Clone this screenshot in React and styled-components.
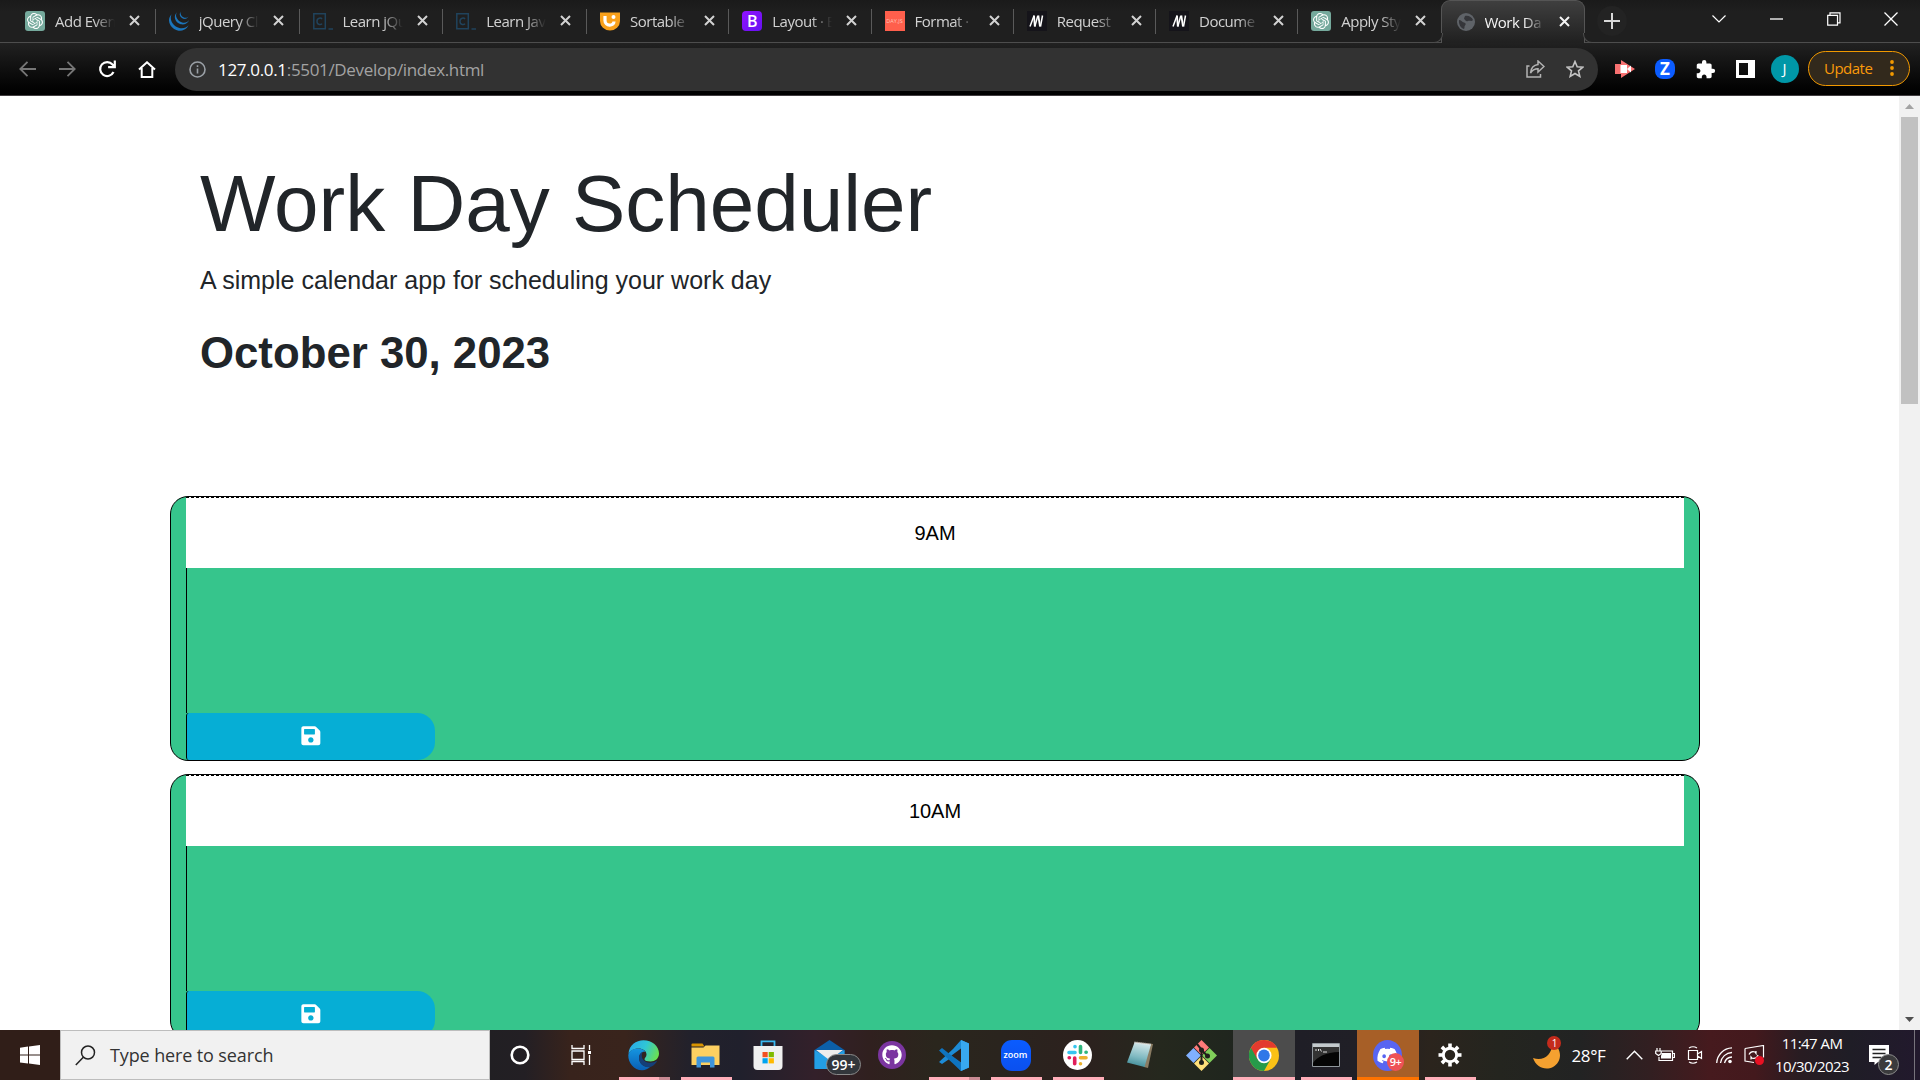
import React from "react";
import styled, { createGlobalStyle, css } from "styled-components";
import { SiOpenai, SiJquery } from "react-icons/si";
import { FaGithub, FaDiscord, FaSave } from "react-icons/fa";
import { MdExtension } from "react-icons/md";

const UI = `"Open Sans", "Noto Sans", sans-serif`;

const GlobalStyle = createGlobalStyle`
  * { box-sizing: border-box; }
  body { margin: 0; overflow: hidden; }
  svg { display: block; flex: none; }
`;

const Screen = styled.div`
  width: 1920px;
  height: 1080px;
  display: flex;
  flex-direction: column;
  overflow: hidden;
  background: #fff;
  font-family: ${UI};
`;

/* ---------- browser chrome ---------- */
const TabStrip = styled.div`
  height: 43px;
  flex: none;
  display: flex;
  align-items: stretch;
  padding-left: 12px;
  background: linear-gradient(#1a1a1a, #1f1f1f 12px);
  border-bottom: 1px solid #4d4d4d;
`;

const Tab = styled.div`
  position: relative;
  width: ${(p) => (p.$wide ? 143.75 : 142.25)}px;
  flex: none;
  display: flex;
  align-items: center;
  padding: 0 0 1px 13px;
  color: ${(p) => (p.$active ? "#f4f4f4" : "#d2d2d2")};
  ${(p) =>
    p.$divider &&
    css`
      &::after {
        content: "";
        position: absolute;
        right: 0;
        top: 9px;
        width: 1px;
        height: 25px;
        background: #5a5a5a;
      }
    `}
  ${(p) =>
    p.$active &&
    css`
      height: 43px;
      width: 144px;
      padding-left: 15px;
      background: linear-gradient(#3f3f3f, #202020);
      border: 1px solid #555;
      border-bottom: 0;
      border-radius: 9px 9px 0 0;
      &::before,
      &::after {
        content: "";
        position: absolute;
        bottom: 0;
        width: 9px;
        height: 9px;
        border-bottom: 1px solid #4d4d4d;
        background: #1f1f1f;
      }
      &::before {
        left: -9px;
        border-right: 1px solid #4d4d4d;
        border-radius: 0 0 9px 0;
      }
      &::after {
        right: -9px;
        border-left: 1px solid #4d4d4d;
        border-radius: 0 0 0 9px;
      }
    `}
`;

const Favicon = styled.span`
  width: 20px;
  height: 20px;
  flex: none;
  display: flex;
  align-items: center;
  justify-content: center;
  border-radius: ${(p) => p.$radius || 0}px;
  background: ${(p) => p.$bg || "transparent"};
  color: ${(p) => p.$fg || "#fff"};
  font: ${(p) => p.$font || `14px ${UI}`};
`;

const TabTitle = styled.span`
  width: 60px;
  margin-left: 10px;
  overflow: hidden;
  white-space: nowrap;
  font-size: 15px;
  letter-spacing: -0.5px;
  line-height: 22px;
  mask-image: linear-gradient(90deg, #000 65%, transparent 100%);
`;

const TabClose = styled.span`
  margin-left: 14px;
`;

const NewTab = styled.span`
  width: 30px;
  height: 30px;
  margin: 6px 0 0 12px;
  border-radius: 50%;
  background: #232323;
  display: flex;
  align-items: center;
  justify-content: center;
`;

const WindowControls = styled.div`
  margin-left: auto;
  display: flex;
  height: 37px;
`;

const WindowButton = styled.span`
  width: 57.3px;
  display: flex;
  align-items: center;
  justify-content: center;
`;

const Toolbar = styled.div`
  height: 53px;
  flex: none;
  display: flex;
  align-items: center;
  padding: 0 10px 0 7px;
  background: linear-gradient(#212121, #030303 85%, #000);
  border-bottom: 1px solid #413d40;
`;

const ToolButton = styled.span`
  width: 40px;
  display: flex;
  justify-content: center;
  align-items: center;
  color: #fff;
`;

const AddressBar = styled.div`
  width: 1423px;
  height: 43px;
  margin: 0 7px 0 8px;
  padding: 0 14px 0 14px;
  border-radius: 22px;
  background: #323232;
  display: flex;
  align-items: center;
`;

const Url = styled.span`
  margin-left: 12px;
  flex: 1;
  color: #a3a3a3;
  font-size: 17px;
  letter-spacing: -0.33px;
  b { font-weight: 400; color: #fff; }
`;

const AddressActions = styled.span`
  display: flex;
  gap: 21px;
  align-items: center;
`;

const Avatar = styled.span`
  width: 28px;
  height: 28px;
  margin-left: 5.5px;
  border-radius: 50%;
  background: #0097a7;
  color: #fff;
  font-size: 15px;
  line-height: 27px;
  text-align: center;
`;

const UpdatePill = styled.span`
  width: 102px;
  height: 35px;
  margin: -2px 0 0 9.5px;
  padding: 0 15px 0 15px;
  border: 1.5px solid #f29900;
  border-radius: 18px;
  background: #32291c;
  color: #fa9a0a;
  font-size: 15px;
  letter-spacing: -0.5px;
  display: flex;
  align-items: center;
  justify-content: space-between;
`;

/* ---------- page ---------- */
const Viewport = styled.div`
  height: 934px;
  flex: none;
  display: flex;
  overflow: hidden;
`;

const Page = styled.main`
  width: 1899px;
  padding: 60px 199px 0 170px;
  color: #212529;
  font-family: "Liberation Sans", Arial, sans-serif;
`;

const Header = styled.header`
  height: 340px;
  padding-left: 30px;
`;

const Title = styled.h1`
  margin: 0 0 10px;
  font-size: 80px;
  line-height: 95px;
  height: 96px;
  font-weight: 400;
`;

const Lead = styled.p`
  margin: 0 0 27px;
  font-size: 25px;
  line-height: 37.5px;
`;

const Today = styled.p`
  margin: 0;
  font-size: 43.75px;
  line-height: 52.5px;
  font-weight: 700;
`;

const TimeBlock = styled.section`
  height: 265px;
  margin-bottom: 13px;
  padding: 0 15px;
  border: 1px solid #000;
  border-radius: 18px;
  background: #36c58c;
  display: flex;
  flex-direction: column;
`;

const Hour = styled.div`
  height: 71px;
  flex: none;
  border-top: 1px dashed #000;
  background: #fff;
  color: #000;
  font-size: 20px;
  line-height: 70px;
  text-align: center;
`;

const Description = styled.div`
  height: 145px;
  flex: none;
  border-left: 1px solid #000;
`;

const SaveButton = styled.div`
  width: 249px;
  height: 47px;
  flex: none;
  display: flex;
  align-items: center;
  justify-content: center;
  padding: 0 1px 1px 0;
  border-left: 1px solid #000;
  border-radius: 3px 18px 18px 3px;
  background: #06aed5;
  color: #fff;
`;

const Scrollbar = styled.aside`
  width: 21px;
  flex: none;
  padding: 0 2px;
  background: #f1f1f1;
  display: flex;
  flex-direction: column;
  align-items: center;
`;

const ScrollArrow = styled.span`
  height: 21px;
  display: flex;
  align-items: center;
`;

const ScrollThumb = styled.span`
  width: 17px;
  height: 287px;
  margin-bottom: auto;
  background: #c1c1c1;
`;

/* ---------- taskbar ---------- */
const Taskbar = styled.footer`
  height: 50px;
  flex: none;
  display: flex;
  align-items: stretch;
  color: #fff;
  background: linear-gradient(
    90deg,
    #301e18 0, #301e18 60px, #211f23 490px, #231f24 525px, #38231c 570px, #39241c 625px,
    #22212b 690px, #20202c 740px, #33202a 815px, #30201f 870px, #2a261d 935px, #2a241e 1000px,
    #2c211e 1080px, #25281e 1160px, #20261e 1225px, #1f1e26 1300px, #201f26 1355px,
    #2b241d 1430px, #24251f 1500px, #222323 1580px, #321f21 1650px, #461a1e 1710px,
    #43191d 1755px, #281c22 1800px, #1f1d26 1850px, #22192d 1920px
  );
`;

const StartButton = styled.span`
  width: 60px;
  display: flex;
  align-items: center;
  justify-content: center;
`;

const SearchBox = styled.div`
  width: 430px;
  padding-left: 14px;
  border: 1px solid #bdbdbd;
  background: #f1f1f1;
  color: #333;
  font-size: 18px;
  letter-spacing: -0.12px;
  display: flex;
  align-items: center;
  gap: 14px;
`;

const TaskItem = styled.span`
  position: relative;
  width: ${(p) => p.$width || 62}px;
  flex: none;
  display: flex;
  align-items: center;
  justify-content: center;
  padding-right: ${(p) => (p.$width ? 0 : 1)}px;
  background: ${(p) => p.$bg || "transparent"};
  ${(p) =>
    p.$line &&
    css`
      &::after {
        content: "";
        position: absolute;
        bottom: 0;
        left: ${p.$wide ? 0 : 6}px;
        right: ${p.$wide ? 0 : 5}px;
        height: 3px;
        background: ${p.$stacked
          ? "linear-gradient(90deg, #ffaeb9 40px, #c98b94 40px)"
          : p.$line};
      }
    `}
`;

const CountBadge = styled.span`
  position: absolute;
  left: 27px;
  top: 24px;
  width: 35px;
  height: 21px;
  border: 1px solid #8a8a8a;
  border-radius: 11px;
  background: #32363b;
  font-size: 14px;
  font-weight: 600;
  line-height: 19px;
  text-align: center;
`;

const RedBadge = styled.span`
  position: absolute;
  left: 30px;
  top: 23px;
  width: 17px;
  height: 18px;
  border-radius: 50%;
  background: #ee5257;
  font-size: 11px;
  font-weight: 600;
  line-height: 17px;
  text-align: center;
  letter-spacing: -0.5px;
`;

const Tray = styled.div`
  margin-left: auto;
  display: flex;
  align-items: center;
`;

const Weather = styled.span`
  position: relative;
  display: flex;
  align-items: center;
  gap: 10px;
  margin-right: 14px;
  font-size: 17px;
  letter-spacing: -0.35px;
`;

const AlertDot = styled.span`
  position: absolute;
  left: 14px;
  top: -5px;
  width: 14px;
  height: 14px;
  border-radius: 50%;
  background: #c42b1c;
  font-size: 10px;
  line-height: 14px;
  text-align: center;
`;

const TrayIcon = styled.span`
  width: 30.1px;
  display: flex;
  justify-content: center;
`;

const Clock = styled.span`
  width: 84px;
  font-size: 15px;
  line-height: 23px;
  letter-spacing: -0.55px;
  text-align: center;
  white-space: nowrap;
`;

const Notifications = styled.span`
  position: relative;
  width: 61px;
  height: 50px;
  border-right: 1px solid #77737c;
  margin-right: 5px;
  padding: 15px 0 0 15px;
`;

const NoticeCount = styled.span`
  position: absolute;
  left: 24px;
  top: 24px;
  width: 21px;
  height: 21px;
  border: 1px solid #8c8c8c;
  border-radius: 50%;
  background: #3b3b3d;
  font-size: 14px;
  font-weight: 600;
  line-height: 19px;
  text-align: center;
`;

/* ---------- icons ---------- */
const Stroke = ({ w = 20, h = w, vb = `0 0 ${w} ${h}`, c = "#fff", sw = 1.5, children }) => (
  <svg width={w} height={h} viewBox={vb} fill="none" stroke={c} strokeWidth={sw}>
    {children}
  </svg>
);

const CloseX = () => (
  <Stroke w={11} c="currentColor" sw={2}><path d="M1 1l9 9M10 1l-9 9" /></Stroke>
);

const OpenAiIcon = () => (
  <Favicon $bg="#75a99c" $radius={3}><SiOpenai size={16} /></Favicon>
);
const JqueryIcon = () => (
  <Favicon $fg="#1b75bb"><SiJquery size={20} /></Favicon>
);
const CodecademyIcon = () => (
  <svg width="20" height="20" viewBox="0 0 20 20" fill="none" stroke="#20435c" strokeWidth="1.5">
    <path d="M.8 2.8h11.5v15H.8zM15.500 18H20" />
    <path d="M9 8C8.200 6.800 4 6.200 4 10.300S8.200 13.800 9 12.600" />
  </svg>
);
const SortableIcon = () => (
  <svg width="20" height="20" viewBox="0 0 20 20">
    <path d="M0 1.500h20V10a10 9.500 0 0 1-20 0z" fill="#f9a11b" />
    <path d="M5 5v4.500c0 6 9 6 9 1" fill="none" stroke="#fff" strokeWidth="3.200" />
    <circle cx="13.500" cy="6" r="2" fill="#fff" />
  </svg>
);
const BootstrapIcon = () => (
  <Favicon $bg="linear-gradient(135deg,#9013fe,#6610f2)" $radius={4} $font={`600 16px ${UI}`}>B</Favicon>
);
const DayIcon = () => (
  <Favicon $bg="#ff5f4c" $fg="#ffc4b8" $font={`5.500px ${UI}`}>DAY.JS</Favicon>
);
const MdnIcon = () => (
  <Favicon $bg="#15141a">
    <svg width="15" height="12" viewBox="0 0 15 12" fill="none" stroke="#fff">
      <path d="M1 11.500L5 .8M8.800 .8L5.800 11.500M13.500 .5L11.500 11.500" strokeWidth="1.500" />
      <path d="M5 .5L5.800 11.500M9.300 .5L11 11.500" strokeWidth="1.800" />
    </svg>
  </Favicon>
);
const GlobeIcon = () => (
  <svg width="18" height="18" viewBox="0 0 18 18">
    <circle cx="9" cy="9" r="9" fill="#5f6368" />
    <path d="M2 7c2 0 3 2 5 2.500s2 2 1 3 0 2-1 3.500C3.500 15 1.500 11 2 7zM8 3c3-1 7 1 8 4-2 2-3 0-5 1S8 7 7 5.500z" fill="#35363a" />
  </svg>
);

const TABS = [
  ["Add Even", OpenAiIcon],
  ["jQuery Cl", JqueryIcon],
  ["Learn jQu", CodecademyIcon],
  ["Learn Jav", CodecademyIcon],
  ["Sortable", SortableIcon],
  ["Layout · B", BootstrapIcon],
  ["Format ·", DayIcon],
  ["Request", MdnIcon],
  ["Docume", MdnIcon],
  ["Apply Sty", OpenAiIcon],
  ["Work Da", GlobeIcon],
];

const EdgeIcon = () => (
  <svg width="31" height="31" viewBox="0 0 31 31">
    <defs>
      <linearGradient id="edgeTop" x1="0" y1=".3" x2="1" y2=".6">
        <stop offset="0" stopColor="#2aa9e8" /><stop offset=".5" stopColor="#2fc6d6" /><stop offset="1" stopColor="#6be04f" />
      </linearGradient>
      <linearGradient id="edgeLow" x1="0" y1="0" x2="0" y2="1">
        <stop offset="0" stopColor="#1595e0" /><stop offset="1" stopColor="#0a5fb4" />
      </linearGradient>
    </defs>
    <path d="M.5 14C1 5 8 .3 15.500 .3 24 .3 31 6 31 13.500c0 5-4 8-8.500 8-3.500 0-6-1-6-2.300s2-2 2-4.700c0-3.500-3.500-6-8-6-5 0-9 2.500-10 5.500z" fill="url(#edgeTop)" />
    <path d="M.3 15C1 10.500 6 8.500 10 8.500c4 0 6 1.500 7.500 3.500-3-1-6.500 1.500-6.500 6 0 6 6 9.500 11 9-2 2-5 3.500-8 3.300C6 30 0 23 .3 15z" fill="url(#edgeLow)" />
    <path d="M11 18c0-3 1.500-5 4-6.300-3 4-.5 11 7 11 3 0 5-1 6-1.500.8-.4 1 .2.600.8-2 3-5 5-7.500 5.200C16 27.500 11 24 11 18z" fill="#153f78" />
  </svg>
);
const ExplorerIcon = () => (
  <svg width="29" height="25" viewBox="0 0 29 25">
    <path d="M.5 1.500Q.5.500 1.500.500h10l2 3H.5z" fill="#d99400" />
    <path d="M.5 4.500h12l2-2h14V22H.5z" fill="#fdd061" />
    <path d="M5.500 24.500V15q0-1.500 1.500-1.500h15q1.500 0 1.500 1.500v9.500h-4.500v-5h-9v5z" fill="#3e95dc" />
  </svg>
);
const StoreIcon = () => (
  <svg width="30" height="31" viewBox="0 0 30 31">
    <path d="M8.500 6V1.300h13V6" fill="none" stroke="#3ab9f0" strokeWidth="1.800" />
    <path d="M.5 6h29v20q0 4-4 4H4.500q-4 0-4-4z" fill="#f0f0f0" />
    <path fill="#f25022" d="M9.500 12h5.200v5.200H9.500z" /><path fill="#7fba00" d="M15.700 12h5.200v5.200h-5.200z" />
    <path fill="#00a4ef" d="M9.500 18.200h5.200v5.200H9.500z" /><path fill="#ffb900" d="M15.700 18.200h5.200v5.200h-5.200z" />
  </svg>
);
const MailIcon = () => (
  <svg width="31" height="30" viewBox="0 0 31 30">
    <path d="M.5 10L15.500 0l15 10v18H.5z" fill="#0c5fa8" />
    <path d="M.5 10l15 9 15-9v19H.5z" fill="#249fe5" />
    <path d="M2 10h27l-12 9h-3z" fill="#ededed" />
  </svg>
);
const GithubIcon = () => (
  <svg width="28" height="28" viewBox="0 0 28 28">
    <circle cx="14" cy="14" r="14" fill="#7b35a0" />
    <g color="#fff"><FaGithub x="4" y="4" size={20} /></g>
  </svg>
);
const VscodeIcon = () => (
  <svg width="30" height="31" viewBox="0 0 30 31">
    <path d="M22 0l8 3.500v24L22 31 11 18.500 3 24l-3-2L14 9z" fill="#1d8bd6" />
    <path d="M3 8l19 15v8L0 10.500z" fill="#0f74c0" />
    <path d="M22 0l8 3.500v24L22 31z" fill="#38a8f0" />
    <path d="M22 8.500v14L12.500 15.500z" fill="#2b211e" />
  </svg>
);
const ZoomBox = styled.span`
  width: 30px;
  height: 31px;
  border-radius: 11px;
  background: linear-gradient(#0b5cff, #0b50ee);
  font-size: 9px;
  font-weight: 600;
  line-height: 29px;
  text-align: center;
`;
const SlackIcon = () => (
  <svg width="29" height="30" viewBox="0 0 29 30">
    <ellipse cx="14.500" cy="15" rx="14.500" ry="15" fill="#fff" />
    <g strokeWidth="3.600" strokeLinecap="round">
      <path d="M6 12.500h6M12 6.500v.3" stroke="#36c5f0" />
      <path d="M17.500 6.500v6M23 12.300h.2" stroke="#2eb67d" />
      <path d="M6.200 17.800h.2M11.700 18v5.700" stroke="#e01e5a" />
      <path d="M17.500 17.800H23M17.500 23.700v.1" stroke="#ecb22e" />
    </g>
  </svg>
);
const NotepadIcon = () => (
  <svg width="28" height="28" viewBox="0 0 28 28">
    <defs>
      <linearGradient id="notepadPage" x1=".6" y1="0" x2=".4" y2="1">
        <stop offset="0" stopColor="#d5e8ea" /><stop offset=".6" stopColor="#7fb9c1" /><stop offset="1" stopColor="#3f8c98" />
      </linearGradient>
    </defs>
    <path d="M9 1l18 2-5 24-4-1z" fill="#8a7c63" />
    <path d="M8.500 1.500L25 3.500 18.500 26 1 21.500z" fill="url(#notepadPage)" />
    <path d="M8.500 1.500L25 3.500" stroke="#e5e5e5" strokeWidth="2" strokeDasharray="1 1" />
  </svg>
);
const GitIcon = () => (
  <svg width="31" height="31" viewBox="0 0 31 31">
    <path d="M15.500 0l7.500 7.500-7.500 7.500L8 7.500z" fill="#ff7a7a" />
    <path d="M7.500 8L15 15.500 7.500 23 0 15.500z" fill="#80b0ff" />
    <path d="M23.500 8l7.500 7.500-7.500 7.500-7.500-7.500z" fill="#80cf5a" />
    <path d="M15.500 16l7.500 7.500-7.500 7.500L8 23.500z" fill="#ffe07a" />
    <path d="M11 4l4.500 5.500V23M15.500 10l6 6" stroke="#20201c" strokeWidth="2" fill="none" />
    <circle cx="15.500" cy="10" r="2.500" fill="#20201c" /><circle cx="21.500" cy="16" r="2.500" fill="#20201c" /><circle cx="15.500" cy="22.500" r="2.500" fill="#20201c" />
  </svg>
);
const ChromeIcon = () => (
  <svg width="30" height="31" viewBox="0 0 48 48" preserveAspectRatio="none">
    <circle cx="24" cy="24" r="24" fill="#fbc116" />
    <path d="M3.200 12A24 24 0 0 0 24 48l10.400-18z" fill="#269b4a" />
    <path d="M3.200 12A24 24 0 0 1 44.800 12H24L13.600 30z" fill="#e33b2e" />
    <circle cx="24" cy="24" r="12" fill="#fff" /><circle cx="24" cy="24" r="9.300" fill="#2f78e8" />
  </svg>
);
const TerminalIcon = () => (
  <svg width="28" height="24" viewBox="0 0 28 24">
    <path d="M.5.500h27v23H.5z" fill="#050505" stroke="#8f969b" />
    <path d="M1 1h26v3H1z" fill="#c4cacd" />
    <path d="M1 4h26v5C14 9 5 14 1 20z" fill="#333" />
    <path d="M3 7h2M6.500 6v2M8 6l1.500 2.500M11 9h4" stroke="#ddd" />
  </svg>
);
const DiscordIcon = () => (
  <svg width="29" height="31" viewBox="0 0 29 31">
    <ellipse cx="14.500" cy="15.500" rx="14.500" ry="15.500" fill="#5865f2" />
    <g color="#fff"><FaDiscord x="3.500" y="4.500" size={22} /></g>
  </svg>
);
const GearIcon = () => (
  <svg width="24" height="24" viewBox="-12 -12 24 24">
    <circle r="6.700" fill="none" stroke="#fff" strokeWidth="3" />
    {[0, 45, 90, 135, 180, 225, 270, 315].map((a) => (
      <path key={a} d="M-1.800-7.500v-4h3.600v4z" fill="#fff" transform={`rotate(${a})`} />
    ))}
  </svg>
);

const PINK = "#ffaeb9";

const BrowserTabs = () => (
  <TabStrip>
    {TABS.map(([title, Icon], i) => (
      <Tab key={i} $active={i === 10} $divider={i < 9} $wide={i < 4}>
        <Icon />
        <TabTitle>{title}</TabTitle>
        <TabClose><CloseX /></TabClose>
      </Tab>
    ))}
    <NewTab><Stroke w={16} c="#d8d8d8" sw={2}><path d="M8 0v16M0 8h16" /></Stroke></NewTab>
    <WindowControls>
      <WindowButton><Stroke w={14} h={8} sw={1.2}><path d="M.5.500L7 7 13.500.5" /></Stroke></WindowButton>
      <WindowButton><Stroke w={13} h={2} sw={1.3}><path d="M0 1h13" /></Stroke></WindowButton>
      <WindowButton><Stroke w={14} sw={1.2}><path d="M.7 3.300h9.800v9.800H.7zM3 3.300V.8h10v10h-2.500" /></Stroke></WindowButton>
      <WindowButton><Stroke w={14} sw={1.3}><path d="M.5.500l13 13M13.500.5l-13 13" /></Stroke></WindowButton>
    </WindowControls>
  </TabStrip>
);

const BrowserToolbar = () => (
  <Toolbar>
    <ToolButton><Stroke w={17} h={16} c="#767676" sw={1.8}><path d="M17 8H1.500M8.500.8L1.300 8l7.200 7.200" /></Stroke></ToolButton>
    <ToolButton><Stroke w={17} h={16} c="#767676" sw={1.8}><path d="M0 8h15.500M8.500.8L15.700 8l-7.200 7.200" /></Stroke></ToolButton>
    <ToolButton><Stroke w={18} h={18} sw={2.2}><path d="M15.500 12A7 7 0 1 1 14.500 4.500L16 6M16.800 .5v6.700h-6.700" /></Stroke></ToolButton>
    <ToolButton><Stroke w={18} h={17} sw={2}><path d="M1 8.500L9 1.300l8 7.200M3.700 7v9h10.600V7" /></Stroke></ToolButton>
    <AddressBar>
      <Stroke w={17} c="#9aa0a6" sw={1.6}><circle cx="8.500" cy="8.500" r="7.500" /><path d="M8.500 7.500v5M8.500 4.200v1.800" /></Stroke>
      <Url><b>127.0.0.1</b>:5501/Develop/index.html</Url>
      <AddressActions>
        <Stroke w={19} h={18} c="#b4b4b4" sw={1.5}><path d="M3.500 6H1v11h13.500v-3M12 1l6 5.500-6 5.500V8.800C8 8.800 6 10.500 4.500 13 5 8 7.500 5 12 4.500z" /></Stroke>
        <Stroke w={18} c="#c4c4c4" sw={1.6}><path d="M9 1.500l2.200 5.200 5.600.5-4.300 3.700 1.300 5.500L9 13.500l-4.800 2.900 1.300-5.500L1.200 7.200l5.600-.5z" /></Stroke>
      </AddressActions>
    </AddressBar>
    <ToolButton>
      <svg width="20" height="18" viewBox="0 0 20 18"><path d="M0 4h6V0l14 9-14 9v-4H0z" fill="#f87171" /><path d="M5.500 5h6.500v8H5.500z" fill="#fff" /><path d="M12 9l4-3.500v7z" fill="#fff" /></svg>
    </ToolButton>
    <ToolButton><Favicon $bg="#0b5cff" $radius={8} $font={`700 17px/20px ${UI}`}>Z</Favicon></ToolButton>
    <ToolButton><MdExtension size={21} /></ToolButton>
    <ToolButton>
      <svg width="19" height="18" viewBox="0 0 19 18"><path fillRule="evenodd" d="M0 0h19v18H0zM3 3v12h9V3z" fill="#fff" /></svg>
    </ToolButton>
    <Avatar>J</Avatar>
    <UpdatePill>
      Update
      <svg width="4" height="18" viewBox="0 0 4 18" fill="#f29900"><circle cx="2" cy="3" r="1.900" /><circle cx="2" cy="9" r="1.900" /><circle cx="2" cy="15" r="1.900" /></svg>
    </UpdatePill>
  </Toolbar>
);

const WindowsTaskbar = () => (
  <Taskbar>
    <StartButton>
      <svg width="20" height="20" viewBox="0 0 20 20" fill="#fff"><path d="M0 2.700l8-1.100v8H0zM9 1.400L20 0v9.600H9zM0 10.500h8v8l-8-1.100zM9 10.500h11V20L9 18.600z" /></svg>
    </StartButton>
    <SearchBox>
      <Stroke w={21} c="#222" sw={1.5}><circle cx="13" cy="7.500" r="6.500" /><path d="M8.300 12.300L.8 20" /></Stroke>
      Type here to search
    </SearchBox>
    <TaskItem $width={60}><Stroke w={20} sw={2.6}><circle cx="10" cy="10" r="8.300" /></Stroke></TaskItem>
    <TaskItem $width={63}>
      <Stroke w={21} h={20} sw={1.3}><path d="M1 0v3.500h12V0M1 6h12v8.500H1zM1 20v-3.500h12V20M18.500 0v5M18.500 10v10" /><path d="M17 6h3v3h-3z" fill="#fff" stroke="none" /></Stroke>
    </TaskItem>
    <TaskItem $line={PINK} $stacked><EdgeIcon /></TaskItem>
    <TaskItem $line={PINK}><ExplorerIcon /></TaskItem>
    <TaskItem><StoreIcon /></TaskItem>
    <TaskItem><MailIcon /><CountBadge>99+</CountBadge></TaskItem>
    <TaskItem><GithubIcon /></TaskItem>
    <TaskItem $line={PINK} $stacked><VscodeIcon /></TaskItem>
    <TaskItem $line={PINK}><ZoomBox>zoom</ZoomBox></TaskItem>
    <TaskItem $line={PINK}><SlackIcon /></TaskItem>
    <TaskItem><NotepadIcon /></TaskItem>
    <TaskItem><GitIcon /></TaskItem>
    <TaskItem $line={PINK} $wide $bg="#4c4c4c"><ChromeIcon /></TaskItem>
    <TaskItem $line={PINK}><TerminalIcon /></TaskItem>
    <TaskItem $line="#ff7300" $wide $bg="#a75f27"><DiscordIcon /><RedBadge>9+</RedBadge></TaskItem>
    <TaskItem $line={PINK}><GearIcon /></TaskItem>
    <Tray>
      <Weather>
        <svg width="28" height="28" viewBox="0 0 28 28"><path d="M19 1c11 7 10 20 1 25C12 30 3 26 0 17c10 4 20-3 19-16z" fill="#f5a130" /></svg>
        <AlertDot>1</AlertDot>
        28°F
      </Weather>
      <TrayIcon><Stroke w={17} h={10} sw={1.4}><path d="M.7 9.300l7.800-8 7.800 8" /></Stroke></TrayIcon>
      <TrayIcon>
        <Stroke w={20} h={14} sw={1.2}><path d="M5 3h12.500v9.500H4V9M17.500 5.500h2v4h-2M2 0v3M5 0v3M.7 3h5.500v2.500L3.500 7.500.7 5.500z" /><path d="M7 5h9v5.500H6V8z" fill="#fff" stroke="none" /></Stroke>
      </TrayIcon>
      <TrayIcon>
        <Stroke w={16} h={18} sw={1.2}><path d="M1.500 4.500h9v9h-9zM10.500 8l4-2.500v7l-4-2.500M2 2q4-2.500 8 0M2 16q4 2.500 8 0" /></Stroke>
      </TrayIcon>
      <TrayIcon>
        <Stroke w={17} h={17} sw={1.3}><path d="M.7 16A16 16 0 0 1 16 .8M4.500 16A12 12 0 0 1 16 5.500M8.500 16A8 8 0 0 1 16 10" /><circle cx="14" cy="14.500" r="1.800" fill="#fff" stroke="none" /></Stroke>
      </TrayIcon>
      <TrayIcon>
        <Stroke w={21} h={20} sw={1.2}><path d="M1 3.500l18.500-3v12M10 17.500l-9-1.500V3.500M5 9.500q2-4 6-2.500l1 1.500V6M14 10q-1 4-6 3.200L7 12v2.500" /><circle cx="15.500" cy="15.500" r="4.500" fill="#e81123" stroke="none" /></Stroke>
      </TrayIcon>
      <Clock>11:47 AM<br />10/30/2023</Clock>
      <Notifications>
        <svg width="20" height="20" viewBox="0 0 20 20"><path d="M0 0h20v17H9l-3.500 3v-3H0z" fill="#fff" /><path d="M3.500 4.500h13M3.500 8.500h13M3.500 12.500h9" stroke="#222" strokeWidth="1.300" /></svg>
        <NoticeCount>2</NoticeCount>
      </Notifications>
    </Tray>
  </Taskbar>
);

export default function App() {
  return (
    <Screen>
      <GlobalStyle />
      <BrowserTabs />
      <BrowserToolbar />
      <Viewport>
        <Page>
          <Header>
            <Title>Work Day Scheduler</Title>
            <Lead>A simple calendar app for scheduling your work day</Lead>
            <Today>October 30, 2023</Today>
          </Header>
          {["9AM", "10AM"].map((hour) => (
            <TimeBlock key={hour}>
              <Hour>{hour}</Hour>
              <Description />
              <SaveButton><FaSave size={21.7} /></SaveButton>
            </TimeBlock>
          ))}
        </Page>
        <Scrollbar>
          <ScrollArrow><svg width="9" height="5" viewBox="0 0 9 5"><path d="M0 5L4.500 0 9 5z" fill="#a3a3a3" /></svg></ScrollArrow>
          <ScrollThumb />
          <ScrollArrow><svg width="9" height="5" viewBox="0 0 9 5"><path d="M0 0l4.500 5L9 0z" fill="#505050" /></svg></ScrollArrow>
        </Scrollbar>
      </Viewport>
      <WindowsTaskbar />
    </Screen>
  );
}
